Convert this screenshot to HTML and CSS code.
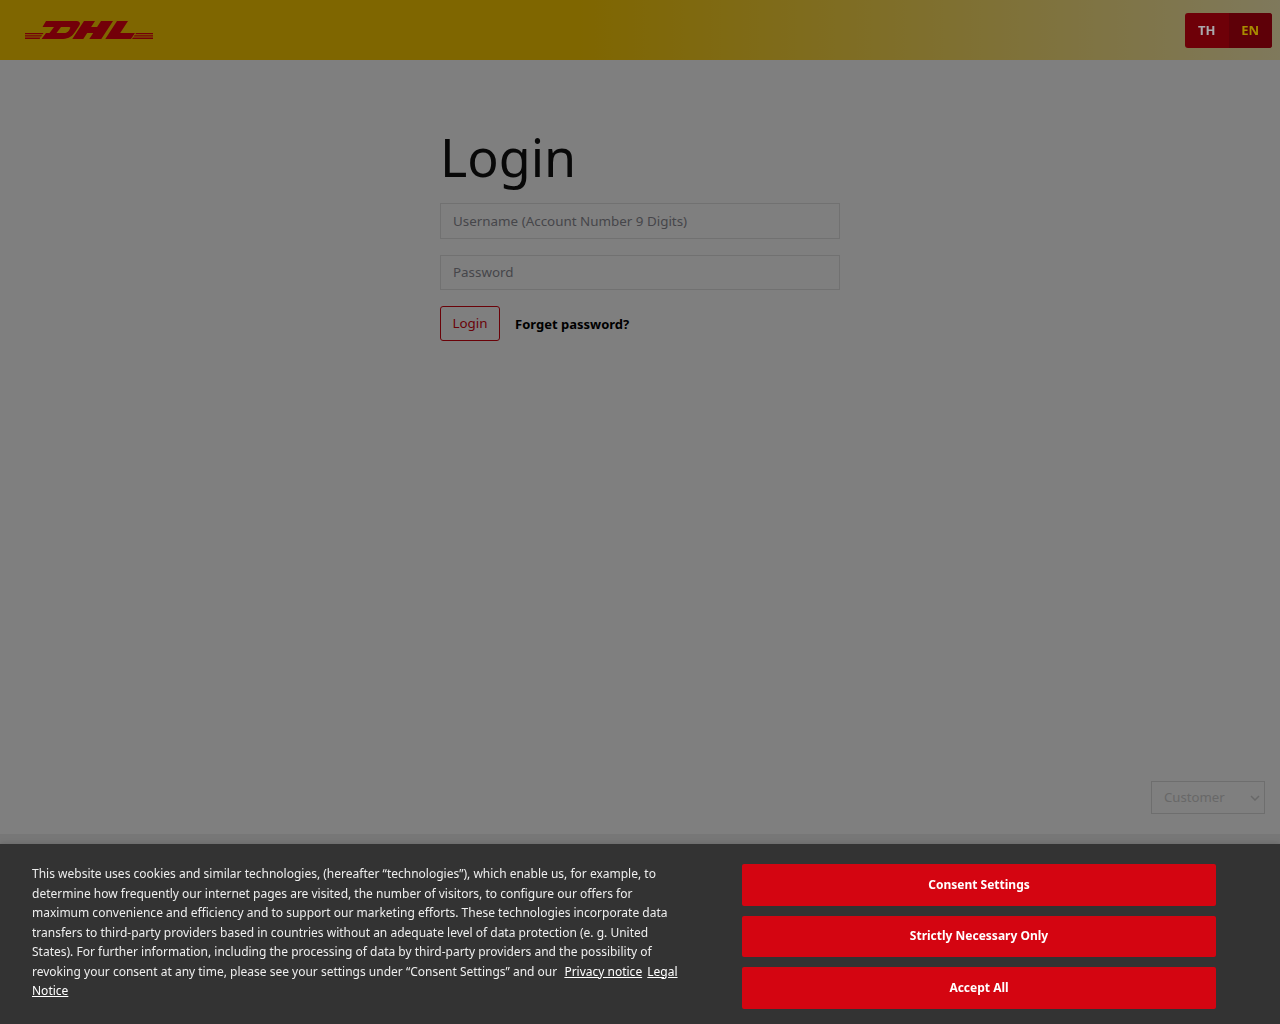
FILE: index.html
```html
<!DOCTYPE html>
<html lang="en">
  <head>
    <meta charset="UTF-8" />
    <title>Login</title>
    <link rel="stylesheet" href="styles.css">
  </head>
  <body>
    <header class="topbar">
      <svg class="logo" width="130" height="20" viewBox="25 20 130 20" aria-label="DHL">
        <g fill="#e60012">
          <path d="M25 33H43.500L42.700 34.300H25zM25 35.300H42L41.200 36.600H25zM25 37.600H40.500L39.600 39H25z" />
          <path d="M136 33H153V34.300H135.200zM134.500 35.300H153V36.600H133.700zM133 37.600H153V39H132z" />
          <path fill-rule="evenodd" d="M46 21H75C80 21 81 23 79 26L75 32C71 38 67 39 61 39H41.500L46 33H49.500L54 27H42.500ZM61 27H69C70.500 27 70.500 28 70 28.500L69 30.500C67.500 32.500 66 33 64 33H56.500Z" />
          <path d="M84 21H95L91.100 27H97.100L101 21H113L101.300 39H89.300L93.200 33H87.200L83.300 39H72.300Z" />
          <path d="M117 21H128L120.200 33H135L131 39H105.300Z" />
        </g>
      </svg>
      <div class="lang">
        <span class="lang-item">TH</span>
        <span class="lang-item active">EN</span>
      </div>
    </header>

    <main class="content">
      <form class="login-form">
        <h1>Login</h1>
        <input type="text" placeholder="Username (Account Number 9 Digits)" />
        <input type="password" placeholder="Password" />
        <div class="actions">
          <button type="button" class="btn-login">Login</button>
          <a href="#" class="forget">Forget password?</a>
        </div>
      </form>
    </main>

    <div class="role-row">
      <select class="role">
        <option>Customer</option>
      </select>
      <svg class="role-arrow" width="10" height="6" viewBox="0 0 10 6">
        <path d="M1 1l4 4 4-4" fill="none" stroke="#d0d0d0" stroke-width="1.500" />
      </svg>
    </div>
    <footer class="footer"></footer>

    <div class="overlay"></div>

    <div class="cookie-banner">
      <p class="cookie-text">
        This website uses cookies and similar technologies, (hereafter “technologies”), which enable us, for example, to
        determine how frequently our internet pages are visited, the number of visitors, to configure our offers for
        maximum convenience and efficiency and to support our marketing efforts. These technologies incorporate data
        transfers to third-party providers based in countries without an adequate level of data protection (e. g. United
        States). For further information, including the processing of data by third-party providers and the possibility of
        revoking your consent at any time, please see your settings under “Consent Settings” and our
        <a href="#" class="first-link">Privacy notice</a> <a href="#">Legal Notice</a>
      </p>
      <div class="cookie-buttons">
        <button type="button">Consent Settings</button>
        <button type="button">Strictly Necessary Only</button>
        <button type="button">Accept All</button>
      </div>
    </div>
  </body>
</html>
```

FILE: styles.css
```css
html,
body {
  height: 100%;
}
body {
  margin: 0;
  display: flex;
  flex-direction: column;
  background-color: #fff;
  font-family: "Noto Sans", sans-serif;
  color: #000;
}
.topbar {
  height: 60px;
  flex: none;
  display: flex;
  align-items: center;
  justify-content: space-between;
  padding: 0 8px 0 25px;
  background: linear-gradient(to right, #ffcc00 45%, #fff2b8 100%);
}
.logo {
  display: block;
}
/* sits above the dimming layer, its colours are already the dimmed ones */
.lang {
  position: relative;
  z-index: 2;
  display: flex;
  height: 35px;
  border-radius: 3px;
  overflow: hidden;
  background-color: #6e0008;
  font-size: 13px;
  font-weight: 700;
}
.lang-item {
  width: 43.5px;
  display: flex;
  align-items: center;
  justify-content: center;
  color: #a9a9ad;
}
.lang-item.active {
  background-color: #5e0008;
  color: #a88c00;
}
.content {
  flex: 1;
  display: flex;
  justify-content: center;
}
.login-form {
  width: 400px;
  padding-top: 63px;
}
h1 {
  margin: 0 0 12px;
  font-size: 52px;
  font-weight: 400;
  line-height: 68px;
  color: #111;
}
input {
  display: block;
  width: 100%;
  height: 35.5px;
  box-sizing: border-box;
  margin-bottom: 16px;
  padding: 0 12px;
  border: 1px solid #e2e2e2;
  font-family: inherit;
  font-size: 13.4px;
}
input::placeholder {
  color: #8c8c94;
  opacity: 1;
}
.actions {
  display: flex;
  align-items: center;
  gap: 15px;
}
.btn-login {
  width: 60px;
  height: 35px;
  padding: 0 0 2px;
  border: 1px solid #d40511;
  border-radius: 3px;
  background-color: #fff;
  color: #d40511;
  font-family: inherit;
  font-size: 13.4px;
}
.forget {
  color: #000;
  font-size: 13px;
  font-weight: 700;
  text-decoration: none;
}
.role-row {
  position: relative;
  display: flex;
  justify-content: flex-end;
  padding: 0 15px 20px 0;
}
.role {
  appearance: none;
  width: 114px;
  height: 33px;
  padding: 0 0 2px 12px;
  border: 1px solid #dcdcdc;
  border-radius: 0;
  background-color: #fff;
  color: #d0d0d0;
  font-family: inherit;
  font-size: 13.2px;
}
.role-arrow {
  position: absolute;
  right: 20px;
  top: 14px;
}
.footer {
  height: 190px;
  flex: none;
  background-color: #eee;
}
.overlay {
  position: fixed;
  inset: 0;
  background-color: rgba(0, 0, 0, 0.5);
}
.cookie-banner {
  position: fixed;
  left: 0;
  right: 0;
  bottom: 0;
  height: 180px;
  box-sizing: border-box;
  display: flex;
  padding: 20px 64px 0 32px;
  background-color: #333;
  box-shadow: 0 0 6px rgba(0, 0, 0, 0.15);
}
.cookie-text {
  width: 650px;
  margin: 0 60px 0 0;
  color: #eee;
  font-size: 12px;
  line-height: 19.5px;
}
.cookie-text a {
  color: #fff;
}
.first-link {
  margin: 0 2px 0 4px;
}
.cookie-buttons {
  flex: 1;
  display: flex;
  flex-direction: column;
  gap: 10px;
}
.cookie-buttons button {
  height: 41.5px;
  padding: 0 0 1px;
  border: none;
  border-radius: 2px;
  background-color: #d40511;
  color: #fff;
  font-family: inherit;
  font-size: 12px;
  font-weight: 700;
}
```
